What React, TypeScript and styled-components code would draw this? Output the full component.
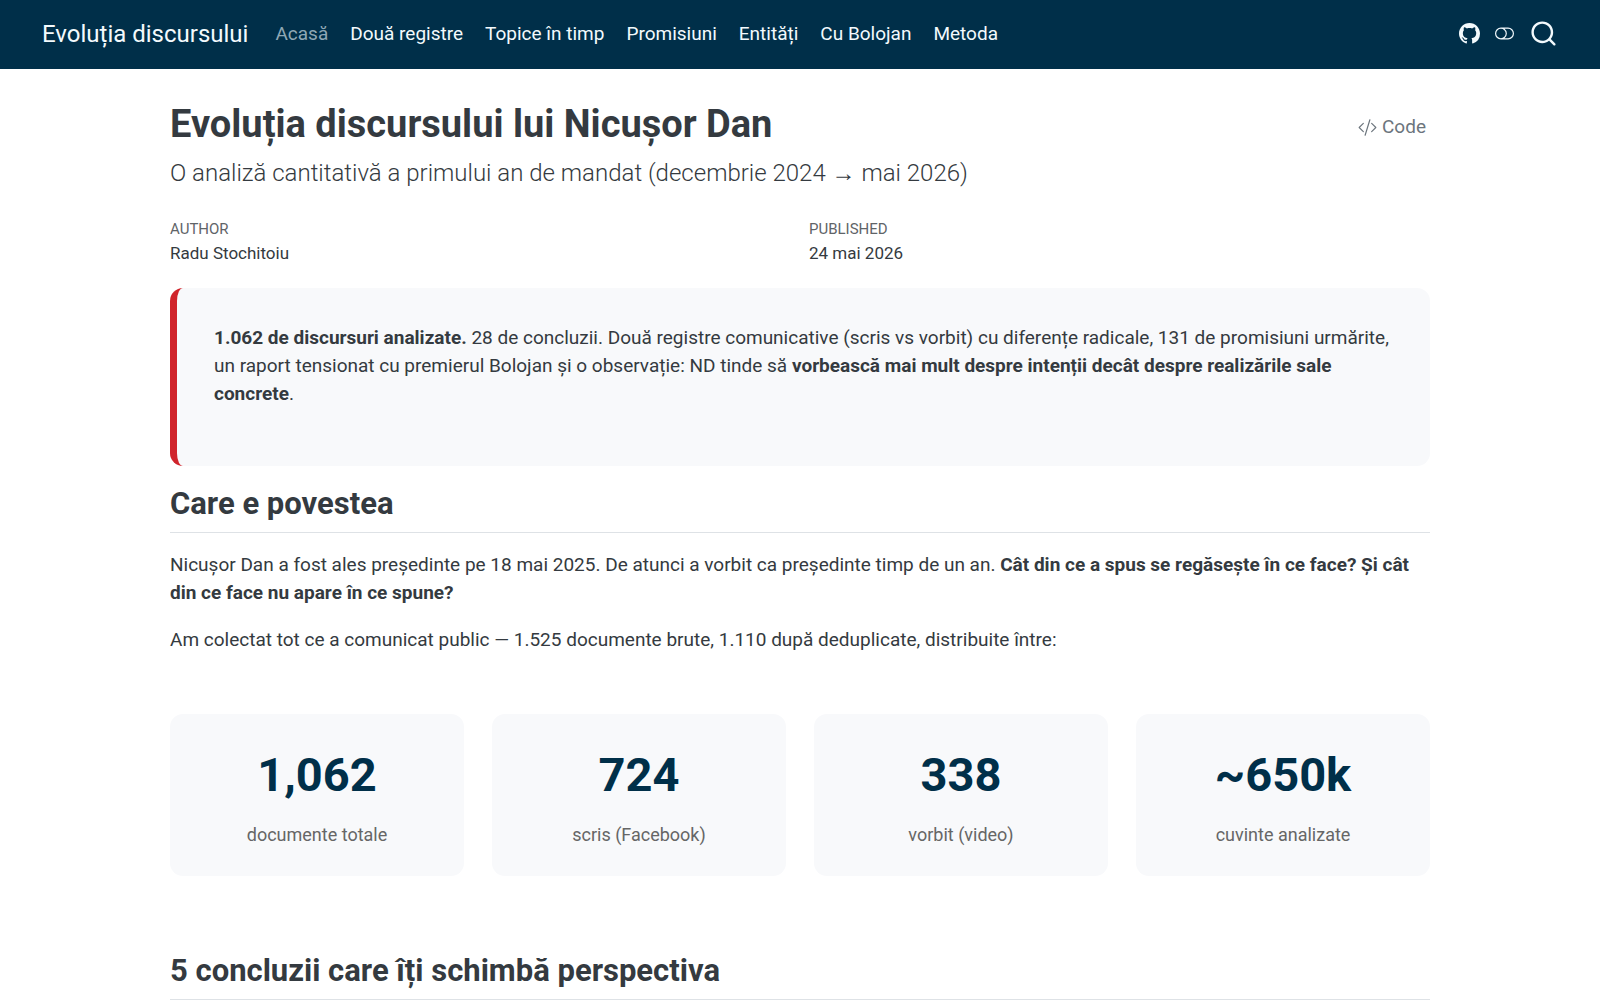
import React from "react";
import styled, { createGlobalStyle } from "styled-components";
import { BsCodeSlash, BsGithub, BsToggleOff } from "react-icons/bs";

const GlobalStyle = createGlobalStyle`
  *, *::before, *::after { box-sizing: border-box; }
  body {
    margin: 0;
    background: #fff;
    color: #343a40;
    font-family: Roboto, "Noto Sans", sans-serif;
    font-size: 19px;
    line-height: 28px;
  }
`;

const Navbar = styled.header`
  display: flex;
  align-items: center;
  height: 69px;
  padding: 0 42px 2px;
  background: #002f49;
`;

const Brand = styled.a`
  margin-right: 27px;
  color: #f3fafd;
  font-size: 24px;
  white-space: nowrap;
  text-decoration: none;
`;

const NavLinks = styled.nav`
  display: flex;
  flex: 1;
  gap: 22px;
`;

const NavLink = styled.a<{ $current?: boolean }>`
  color: ${(p) => (p.$current ? "#8fa8b5" : "#f3fafd")};
  white-space: nowrap;
  text-decoration: none;
`;

const Tools = styled.div`
  display: flex;
  align-items: center;
  gap: 15px;
  color: #f3fafd;
`;

const ToolLink = styled.a`
  display: flex;
  color: inherit;
`;

const ToolButton = styled.button`
  display: flex;
  padding: 0;
  border: 0;
  background: none;
  color: inherit;
  cursor: pointer;
`;

const Content = styled.main`
  max-width: 1260px;
  margin: 0 auto;
  padding-top: 32px;
`;

const TitleRow = styled.div`
  display: flex;
  align-items: center;
  justify-content: space-between;
  padding-right: 4px;
`;

const Title = styled.h1`
  margin: 0;
  font-size: 38px;
  font-weight: 700;
  line-height: 46px;
`;

const CodeButton = styled.button`
  display: flex;
  align-items: center;
  gap: 5px;
  padding: 6px 0 0;
  border: 0;
  background: none;
  color: #6c757d;
  font: inherit;
  cursor: pointer;
`;

const Subtitle = styled.p`
  margin: 8px 0 0;
  font-size: 24px;
  font-weight: 300;
  line-height: 36px;
`;

const Meta = styled.dl`
  display: grid;
  grid-template-columns: 1fr 1fr;
  gap: 18px;
  margin: 27px 0 22px;
`;

const MetaItem = styled.div``;

const MetaLabel = styled.dt`
  color: #5f6468;
  font-size: 15px;
  line-height: 22px;
  text-transform: uppercase;
`;

const MetaValue = styled.dd`
  margin: 0;
  font-size: 17px;
  line-height: 26px;
`;

const Callout = styled.section`
  padding: 36px 37px 58px;
  border-left: 7px solid #d0242b;
  border-radius: 13px;
  background: #f8f9fb;
`;

const Paragraph = styled.p`
  margin: 0 0 19px;
`;

const CalloutText = styled.p`
  margin: 0;
`;

const Heading = styled.h2`
  margin: 0 0 18px;
  padding-bottom: 9px;
  border-bottom: 1px solid #dee2e6;
  font-size: 31px;
  font-weight: 700;
  line-height: 38px;
`;

const Section = styled.section<{ $gap: number }>`
  padding-top: ${(p) => p.$gap}px;
`;

const Stats = styled.div`
  display: grid;
  grid-template-columns: repeat(4, 1fr);
  gap: 28px;
  padding-top: 41px;
`;

const StatCard = styled.div`
  padding: 28px;
  border-radius: 13px;
  background: #f8f9fb;
  text-align: center;
`;

const StatNumber = styled.div`
  margin-bottom: 14px;
  color: #002f49;
  font-size: 47px;
  font-weight: 700;
  line-height: 66px;
`;

const StatLabel = styled.div`
  color: #666;
  font-size: 18px;
  line-height: 26px;
`;

const links = [
  "Acasă",
  "Două registre",
  "Topice în timp",
  "Promisiuni",
  "Entități",
  "Cu Bolojan",
  "Metoda",
];

const stats = [
  { value: "1,062", label: "documente totale" },
  { value: "724", label: "scris (Facebook)" },
  { value: "338", label: "vorbit (video)" },
  { value: "~650k", label: "cuvinte analizate" },
];

function SearchIcon() {
  return (
    <svg width="29" height="29" viewBox="0 0 24 24" fill="currentColor" aria-hidden="true">
      <path d="M16.041 15.856c-0.034 0.026-0.067 0.055-0.099 0.087s-0.060 0.064-0.087 0.099c-1.258 1.213-2.969 1.958-4.855 1.958-1.933 0-3.682-0.782-4.95-2.050s-2.050-3.017-2.050-4.95 0.782-3.682 2.050-4.95 3.017-2.050 4.95-2.050 3.682 0.782 4.95 2.050 2.050 3.017 2.050 4.95c0 1.886-0.745 3.597-1.959 4.856zM21.707 20.293l-3.675-3.675c1.231-1.54 1.968-3.493 1.968-5.618 0-2.485-1.008-4.736-2.636-6.364s-3.879-2.636-6.364-2.636-4.736 1.008-6.364 2.636-2.636 3.879-2.636 6.364 1.008 4.736 2.636 6.364 3.879 2.636 6.364 2.636c2.125 0 4.078-0.737 5.618-1.968l3.675 3.675c0.391 0.391 1.024 0.391 1.414 0s0.391-1.024 0-1.414z" />
    </svg>
  );
}

export default function App() {
  return (
    <>
      <GlobalStyle />
      <Navbar>
        <Brand href="#">Evoluția discursului</Brand>
        <NavLinks>
          {links.map((label, i) => (
            <NavLink key={label} href="#" $current={i === 0}>
              {label}
            </NavLink>
          ))}
        </NavLinks>
        <Tools>
          <ToolLink href="#" aria-label="GitHub">
            <BsGithub size={21} />
          </ToolLink>
          <ToolButton aria-label="Toggle dark mode">
            <BsToggleOff size={19} />
          </ToolButton>
          <ToolButton aria-label="Search">
            <SearchIcon />
          </ToolButton>
        </Tools>
      </Navbar>
      <Content>
        <TitleRow>
          <Title>Evoluția discursului lui Nicușor Dan</Title>
          <CodeButton>
            <BsCodeSlash size={19} />
            Code
          </CodeButton>
        </TitleRow>
        <Subtitle>
          O analiză cantitativă a primului an de mandat (decembrie 2024 → mai 2026)
        </Subtitle>
        <Meta>
          <MetaItem>
            <MetaLabel>Author</MetaLabel>
            <MetaValue>Radu Stochitoiu</MetaValue>
          </MetaItem>
          <MetaItem>
            <MetaLabel>Published</MetaLabel>
            <MetaValue>24 mai 2026</MetaValue>
          </MetaItem>
        </Meta>
        <Callout>
          <CalloutText>
            <strong>1.062 de discursuri analizate.</strong> 28 de concluzii. Două registre
            comunicative (scris vs vorbit) cu diferențe radicale, 131 de promisiuni urmărite, un
            raport tensionat cu premierul Bolojan și o observație: ND tinde să{" "}
            <strong>vorbească mai mult despre intenții decât despre realizările sale concrete</strong>.
          </CalloutText>
        </Callout>
        <Section $gap={19}>
          <Heading>Care e povestea</Heading>
          <Paragraph>
            Nicușor Dan a fost ales președinte pe 18 mai 2025. De atunci a vorbit ca președinte timp
            de un an.{" "}
            <strong>
              Cât din ce a spus se regăsește în ce face? Și cât din ce face nu apare în ce spune?
            </strong>
          </Paragraph>
          <Paragraph>
            Am colectat tot ce a comunicat public — 1.525 documente brute, 1.110 după deduplicate,
            distribuite între:
          </Paragraph>
          <Stats>
            {stats.map((s) => (
              <StatCard key={s.label}>
                <StatNumber>{s.value}</StatNumber>
                <StatLabel>{s.label}</StatLabel>
              </StatCard>
            ))}
          </Stats>
        </Section>
        <Section $gap={76}>
          <Heading>5 concluzii care îți schimbă perspectiva</Heading>
        </Section>
      </Content>
    </>
  );
}
